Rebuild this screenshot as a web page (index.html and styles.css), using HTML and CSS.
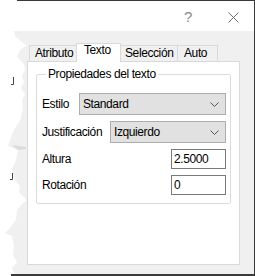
FILE: index.html
```html
<!DOCTYPE html>
<html lang="es">

<head>
    <meta charset="UTF-8">
    <title>Propiedades</title>
    <link rel="stylesheet" href="styles.css">
</head>

<body>
    <div class="window">
        <div class="titlebar">
            <span class="help-btn">?</span>
            <span class="close-btn">
                <svg width="11" height="11" viewBox="0 0 11 11">
                    <path d="M0.5 0.5 L10.5 10.5 M10.5 0.5 L0.5 10.5" stroke="#6f6f6f" stroke-width="1" fill="none"/>
                </svg>
            </span>
        </div>

        <div class="content">
            <ul class="tabs">
                <li class="tab tab-atributo">Atributo</li>
                <li class="tab tab-texto active">Texto</li>
                <li class="tab tab-seleccion">Selección</li>
                <li class="tab tab-auto">Auto</li>
            </ul>

            <div class="panel">
                <fieldset class="group">
                    <legend>Propiedades del texto</legend>

                    <div class="row row-combo">
                        <span class="label">Estilo</span>
                        <div class="combo combo-wide">
                            <span>Standard</span>
                            <svg width="9" height="5" viewBox="0 0 9 5"><path d="M0.5 0.5 L4.5 4.5 L8.5 0.5" stroke="#555" fill="none"/></svg>
                        </div>
                    </div>

                    <div class="row row-combo">
                        <span class="label">Justificación</span>
                        <div class="combo combo-narrow">
                            <span>Izquierdo</span>
                            <svg width="9" height="5" viewBox="0 0 9 5"><path d="M0.5 0.5 L4.5 4.5 L8.5 0.5" stroke="#555" fill="none"/></svg>
                        </div>
                    </div>

                    <div class="row row-input">
                        <span class="label">Altura</span>
                        <div class="textbox">2.5000</div>
                    </div>

                    <div class="row row-input">
                        <span class="label">Rotación</span>
                        <div class="textbox">0</div>
                    </div>
                </fieldset>
            </div>
        </div>

        <!-- borde rasgado a la izquierda -->
        <svg class="torn-edge" width="26" height="245" viewBox="0 31 26 245">
            <rect x="0" y="31" width="26" height="245" fill="#fff"/>
            <polygon fill="#f0f0f0" points="14,31 15,36 22,42 26,45 26,46 20,50 17,56 20,60 24,64 25,70 22,76 24,82 21,88 25,94 22,100 23,110 20,120 14,130 10,140 8,146 18,150 16,160 12,170 15,180 20,186 19,192 26,199 26,201 22,204 17,210 16,220 10,228 5,233 12,236 14,245 13,255 17,262 12,268 14,274 26,274 26,31"/>
            <polygon fill="#dcdcdc" points="12,145 26,147 26,149 18,150"/>
            <path d="M13.5 77 V84.5 H11" stroke="#444" fill="none"/>
            <path d="M12.5 173 V179.5 H10" stroke="#444" fill="none"/>
            <rect x="11" y="274" width="15" height="2" fill="#3a3a3a"/>
        </svg>
    </div>
</body>

</html>
```

FILE: styles.css
```css
* {
    box-sizing: border-box;
    margin: 0;
    padding: 0;
}

body {
    font-family: "Liberation Sans", Arial, sans-serif;
    font-size: 12px;
    letter-spacing: -0.4px;
    color: #000;
    background-color: #fff;
    width: 255px;
    height: 276px;
    overflow: hidden;
}

.window {
    position: relative;
    height: 276px;
    margin-left: 17px;
    background-color: #f0f0f0;
    border-top: 1px solid #3a3a3a;
    border-right: 1px solid #3a3a3a;
    border-bottom: 2px solid #3a3a3a;
}

.titlebar {
    height: 30px;
    margin-left: -17px;
    background-color: #fff;
    display: flex;
    justify-content: flex-end;
    align-items: center;
    padding-right: 15px;
    gap: 36px;
}

.help-btn {
    font-size: 15px;
    color: #8a8a8a;
    padding-top: 1px;
}

.close-btn {
    display: flex;
    padding-top: 2px;
}

.content {
    padding: 12px 0 0 10px;
}

/* Tabs */
.tabs {
    display: flex;
    align-items: flex-end;
    height: 18px;
    padding-left: 2px;
    list-style-type: none;
    position: relative;
    z-index: 1;
}

.tab {
    height: 16px;
    border: 1px solid #d9d9d9;
    border-bottom: none;
    background-color: #f0f0f0;
    line-height: 15px;
    margin-left: -1px;
}

.tab:first-child {
    margin-left: 0;
}

.tab-atributo {
    width: 48px;
    padding-left: 5px;
}

.tab-texto {
    width: 45px;
    padding-left: 7px;
}

.tab-seleccion {
    width: 58px;
    padding-left: 4px;
}

.tab-auto {
    width: 41px;
    padding-left: 6px;
}

.tab.active {
    height: 19px;
    margin-bottom: -1px;
    background-color: #fff;
    line-height: 13px;
    position: relative;
}

.panel {
    width: 213px;
    height: 204px;
    border: 1px solid #d9d9d9;
    background-color: #fff;
    padding: 5px 8px 0 8px;
}

/* Group box */
.group {
    border: 1px solid #dcdcdc;
    border-radius: 2px;
    padding: 12px 4px 8px 5px;
}

.group legend {
    margin-left: 4px;
    padding: 0 2px;
    line-height: 14px;
}

.row {
    display: flex;
    align-items: center;
}

.row-combo {
    height: 22px;
    margin-bottom: 6px;
}

.row-input {
    height: 20px;
    margin-bottom: 6px;
}

.row:last-child {
    margin-bottom: 0;
}

.combo {
    margin-left: auto;
    height: 22px;
    background-color: #e1e1e1;
    border: 1px solid #adadad;
    display: flex;
    align-items: center;
    justify-content: space-between;
    padding: 0 6px 0 3px;
}

.combo-wide {
    width: 147px;
}

.combo-narrow {
    width: 116px;
}

.textbox {
    margin-left: auto;
    width: 55px;
    height: 20px;
    border: 1px solid #7a7a7a;
    background-color: #fff;
    padding: 0 2px;
    line-height: 18px;
}

.torn-edge {
    position: absolute;
    top: 30px;
    left: -17px;
}
```
